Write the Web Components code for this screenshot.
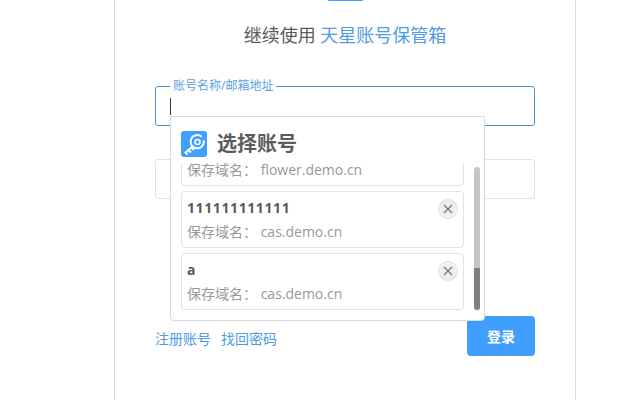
<!DOCTYPE html>
<html lang="zh-CN">
<head>
<meta charset="utf-8">
<title>登录</title>
<style>
    html, body { margin: 0; height: 100%; background: #fff; overflow: hidden; }
    body { font-family: "Open Sans", "Noto Sans CJK SC", sans-serif; }
</style>
</head>
<body>
<template id="login-card-tpl">
    <style>
        :host { display: flex; justify-content: center; height: 400px; padding-left: 50px; box-sizing: border-box; position: relative; }
        .card { width: 462px; height: 400px; box-sizing: border-box; border: solid #dcdcdc; border-width: 0 1px; padding: 0 40px; display: flex; flex-direction: column; }
        .logo { align-self: center; width: 35px; height: 1px; background: #4a9cf0; border-radius: 0 0 2px 2px; margin-bottom: 22px; }
        h1 { margin: 0 0 39px; height: 24px; font-size: 18px; line-height: 24px; font-weight: 400; text-align: center; color: #5a5a5a; }
        h1 span { color: #4f9be4; }
        .gap { height: 33px; flex: none; }
        .foot { display: flex; justify-content: space-between; align-items: center; margin-top: 117px; }
        .links { display: flex; gap: 10px; font-size: 14px; color: #4f9be4; padding-top: 3px; }
        .btn { width: 68px; height: 40px; border-radius: 4px; background: #409eff; color: #fff; font-size: 14px; font-weight: 700; display: flex; align-items: center; justify-content: center; }
    </style>
    <div class="card">
        <div class="logo"></div>
        <h1>继续使用 <span>天星账号保管箱</span></h1>
        <slot name="account"></slot>
        <div class="gap"></div>
        <slot name="password"></slot>
        <div class="foot">
            <div class="links"><span>注册账号</span><span>找回密码</span></div>
            <div class="btn">登录</div>
        </div>
    </div>
    <slot name="overlay"></slot>
</template>

<template id="text-field-tpl">
    <style>
        :host { display: block; height: 40px; position: relative; box-sizing: border-box; border: 1px solid #e2e2e2; border-radius: 3px; }
        :host([active]) { border-color: #4a90d9; }
        .label { display: none; position: absolute; left: 14px; top: -9px; padding: 0 3px; background: #fff; font-size: 12px; line-height: 16px; color: #5a9fe6; }
        :host([active]) .label { display: block; }
        .caret { display: none; position: absolute; left: 14px; top: 11px; width: 1px; height: 17px; background: #333; }
        :host([active]) .caret { display: block; }
    </style>
    <span class="label"><slot></slot></span>
    <span class="caret"></span>
</template>

<template id="account-picker-tpl">
    <style>
        :host { display: block; position: absolute; left: 170px; top: 116px; width: 315px; height: 205px; box-sizing: border-box; background: #fff; border: 1px solid #dcdcdc; border-radius: 0 0 4px 4px; box-shadow: 0 1px 3px rgba(0,0,0,.04); }
        header { display: flex; align-items: center; gap: 10px; height: 26px; padding: 14px 0 0 10px; }
        h2 { margin: 0; font-size: 20px; line-height: 26px; font-weight: 700; color: #5c5c5c; }
        svg.logo { flex: none; display: block; }
        .view { position: absolute; left: 10px; top: 46px; width: 283px; bottom: 10px; overflow: hidden; display: flex; flex-direction: column; justify-content: flex-end; gap: 5px; }
        .track { position: absolute; left: 303px; top: 50px; bottom: 10px; width: 6px; border-radius: 3px; background: #c4c5ca; overflow: hidden; }
        .thumb { position: absolute; left: 0; right: 0; bottom: 0; height: 42px; background: #808084; }
    </style>
    <header>
        <svg class="logo" width="26" height="26" viewBox="0 0 26 26">
            <rect width="26" height="26" rx="3" fill="#409eff"/>
            <path d="M20.6 5.8 A6.6 6.6 0 1 0 22.6 9.2" fill="none" stroke="#fff" stroke-width="1.9"/>
            <circle cx="16.5" cy="11" r="2.5" fill="none" stroke="#fff" stroke-width="1.6"/>
            <path d="M11.5 15.5 L4.5 21.5 L6.5 23.5 M7.5 19 L10 21.5 M10.5 16.5 L13 19" fill="none" stroke="#fff" stroke-width="2"/>
        </svg>
        <h2>选择账号</h2>
    </header>
    <div class="view"><slot></slot></div>
    <div class="track"><div class="thumb"></div></div>
</template>

<template id="account-item-tpl">
    <style>
        :host { display: block; flex: none; position: relative; box-sizing: border-box; height: 57px; border: 1px solid #e2e2e2; border-radius: 4px; padding: 6px 5px 0; }
        .name { height: 20px; font-size: 14px; line-height: 20px; font-weight: 700; color: #5a5a5a; letter-spacing: .6px; }
        .domain { margin-top: 4px; height: 20px; font-size: 14px; line-height: 20px; color: #999; white-space: nowrap; }
        .del { position: absolute; right: 5px; top: 7px; width: 20px; height: 20px; border-radius: 50%; background: #eceef5; border: 1px solid #e2e4ea; box-sizing: border-box; display: flex; align-items: center; justify-content: center; }
    </style>
    <div class="name"><slot name="name"></slot></div>
    <div class="domain">保存域名： <slot name="domain"></slot></div>
    <div class="del">
        <svg width="10" height="10" viewBox="0 0 10 10"><path d="M1 1 L9 9 M9 1 L1 9" stroke="#70747a" stroke-width="1.1" fill="none"/></svg>
    </div>
</template>

<login-card>
    <text-field slot="account" active>账号名称/邮箱地址</text-field>
    <text-field slot="password"></text-field>
    <account-picker slot="overlay">
        <account-item><span slot="domain">flower.demo.cn</span></account-item>
        <account-item><span slot="name">111111111111</span><span slot="domain">cas.demo.cn</span></account-item>
        <account-item><span slot="name">a</span><span slot="domain">cas.demo.cn</span></account-item>
    </account-picker>
</login-card>

<script>
    // every element just stamps its own template into an open shadow root
    function register(tag, tplId) {
        customElements.define(tag, class extends HTMLElement {
            constructor() {
                super();
                const tpl = document.getElementById(tplId);
                this.attachShadow({ mode: 'open' }).appendChild(tpl.content.cloneNode(true));
            }
        });
    }

    register('login-card', 'login-card-tpl');
    register('text-field', 'text-field-tpl');
    register('account-picker', 'account-picker-tpl');
    register('account-item', 'account-item-tpl');
</script>
</body>
</html>
